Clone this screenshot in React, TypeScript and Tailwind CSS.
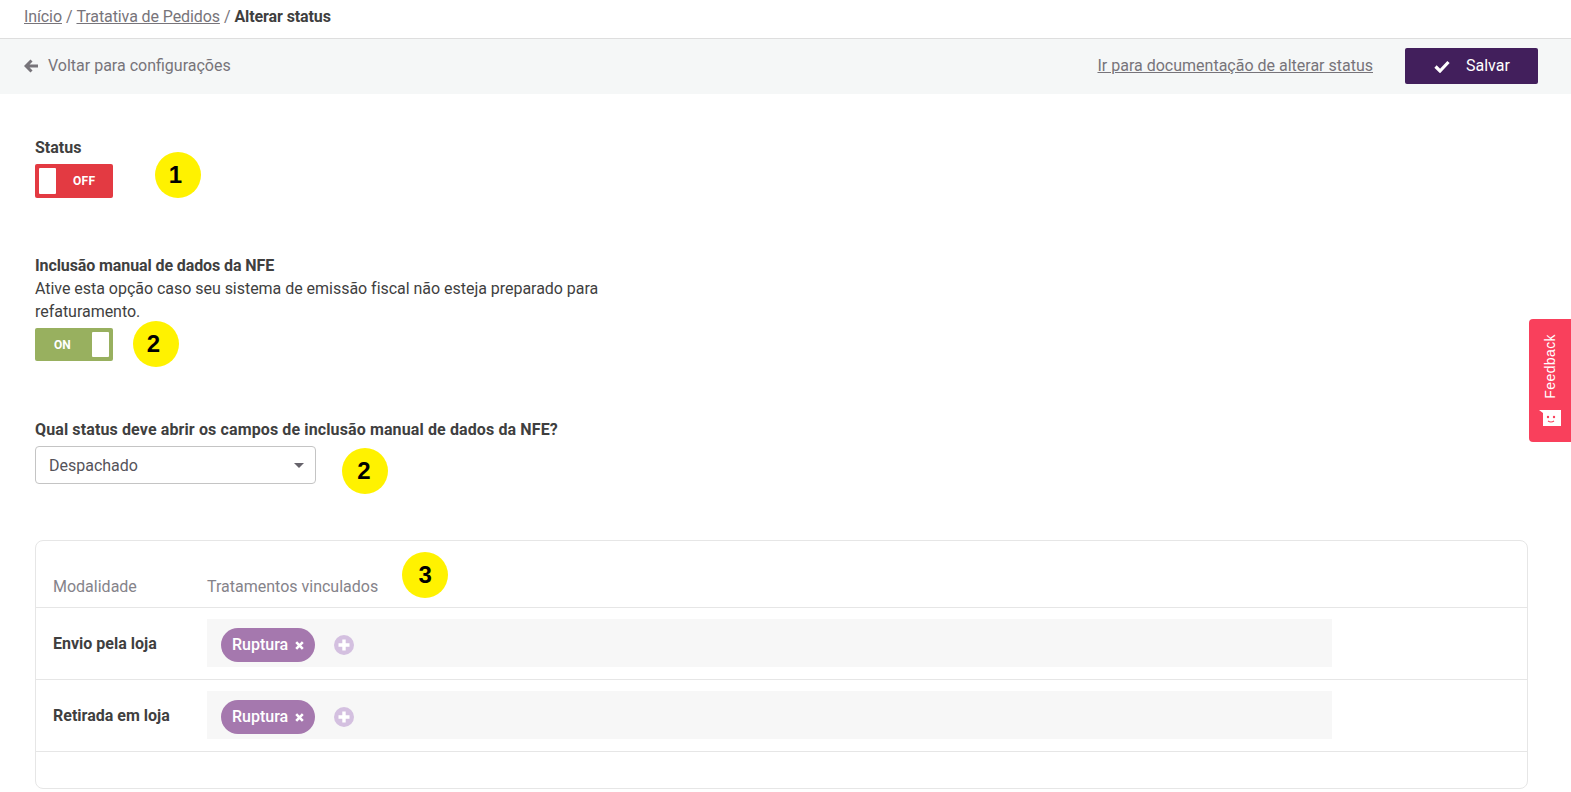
function Marker({ n, className }: { n: number; className: string }) {
  return (
    <div
      className={`flex h-[46px] w-[46px] shrink-0 items-center justify-center rounded-full bg-[#fff200] font-['Liberation_Sans',sans-serif] text-[24px] font-bold text-black ${className}`}
    >
      {n}
    </div>
  );
}

function Row({ name }: { name: string }) {
  return (
    <div className="flex h-[72px] items-center border-b border-[#e6e6e6] pb-px">
      <div className="w-[171px] pl-[17px] pt-[2px] font-bold text-[#3f3f3f]">{name}</div>
      <div className="flex h-[48px] w-[1125px] items-center bg-[#f7f7f7] pl-[14px] pt-[4px]">
        <div className="flex h-[34px] w-[94px] items-center rounded-full bg-[#a578ae] pl-[11px] font-medium text-white">
          Ruptura
          <svg className="ml-[7px]" width="9" height="9" viewBox="0 0 9 9" stroke="white" strokeWidth="2.6">
            <path d="M1.2 1.2l6.6 6.6M7.8 1.2l-6.6 6.6" />
          </svg>
        </div>
        <svg className="ml-[19px]" width="20" height="20" viewBox="0 0 20 20">
          <circle cx="10" cy="10" r="10" fill="#d4c0e0" />
          <path d="M10 4.5v11M4.5 10h11" stroke="white" strokeWidth="3.4" />
        </svg>
      </div>
    </div>
  );
}

export default function App() {
  return (
    <div className="relative h-[792px] w-full overflow-hidden bg-white font-['Roboto',sans-serif] text-[16px] text-[#3f3f3f]">
      <div className="flex h-[39px] items-center border-b border-[#dedede] pb-[5px] pl-[24px] tracking-[-0.1px] text-[#77747a]">
        <a className="underline" href="#">Início</a>
        <span className="mx-[4px]">/</span>
        <a className="underline" href="#">Tratativa de Pedidos</a>
        <span className="mx-[4px]">/</span>
        <span className="font-bold text-[#3f3f3f]">Alterar status</span>
      </div>

      <div className="flex h-[55px] items-center justify-between bg-[#f5f7f7] pb-px pl-[24px] pr-[33px] text-[#77747a]">
        <div className="flex items-center">
          <svg className="mr-[10px]" width="14" height="14" viewBox="0 0 14 14" fill="none" stroke="#77747a" strokeWidth="3">
            <path d="M7.5 1.5L2 7l5.5 5.5M2 7h12" />
          </svg>
          Voltar para configurações
        </div>
        <div className="flex items-center">
          <a className="underline" href="#">Ir para documentação de alterar status</a>
          <button className="ml-[32px] flex h-[36px] w-[133px] items-center rounded-[2px] bg-[#421f5c] pl-[29px] text-white">
            <svg className="mr-[16px]" width="16" height="13" viewBox="0 0 16 13" fill="none" stroke="white" strokeWidth="3.2">
              <path d="M1.5 6.5L6 11 14.5 2" />
            </svg>
            Salvar
          </button>
        </div>
      </div>

      <div className="px-[35px] pt-[45px]">
        <div className="font-bold leading-[18px]">Status</div>
        <div className="mt-[7px] flex items-center">
          <div className="flex h-[34px] w-[78px] items-center rounded-[2px] bg-[#e33a42] pl-[4px]">
            <div className="h-[26px] w-[17px] rounded-[1px] bg-white" />
            <span className="ml-[17px] text-[12px] font-bold tracking-[0.3px] text-white">OFF</span>
          </div>
          <Marker n={1} className="-my-[6px] ml-[42px] -translate-y-[6px] pr-[5px]" />
        </div>

        <div className="mt-[56px] w-[600px] leading-[23px] tracking-[-0.03px]">
          <div className="font-bold tracking-[-0.1px]">Inclusão manual de dados da NFE</div>
          <div>Ative esta opção caso seu sistema de emissão fiscal não esteja preparado para refaturamento.</div>
        </div>
        <div className="mt-[4px] flex items-center">
          <div className="flex h-[33px] w-[78px] items-center rounded-[2px] bg-[#98b05f] pl-[19px] pr-[4px]">
            <span className="pt-px text-[12px] font-bold text-white">ON</span>
            <div className="ml-auto h-[25px] w-[17px] rounded-[1px] bg-white" />
          </div>
          <Marker n={2} className="-my-[6px] ml-[20px] pr-[5px]" />
        </div>

        <div className="mt-[60px] font-bold leading-[18px] tracking-[0.12px]">Qual status deve abrir os campos de inclusão manual de dados da NFE?</div>
        <div className="mt-[7px] flex items-center">
          <div className="flex h-[38px] w-[281px] items-center justify-between rounded-[4px] border border-[#c4c4c4] pl-[13px] pr-[11px] pt-px text-[#55535a]">
            Despachado
            <div className="h-0 w-0 border-x-[5px] border-t-[5px] border-x-transparent border-t-[#66636b]" />
          </div>
          <Marker n={2} className="-my-[6px] ml-[26px] translate-y-[6px] pr-[2px]" />
        </div>

        <div className="mt-[56px] h-[249px] w-[1493px] rounded-[8px] border border-[#e6e6e6]">
          <div className="flex h-[67px] items-end border-b border-[#e6e6e6] pb-[8px] text-[#85838a]">
            <div className="w-[171px] pl-[17px]">Modalidade</div>
            <div>Tratamentos vinculados</div>
            <Marker n={3} className="mb-px ml-[24px]" />
          </div>
          <Row name="Envio pela loja" />
          <Row name="Retirada em loja" />
        </div>
      </div>

      <div className="absolute right-0 top-[319px] flex h-[123px] w-[42px] flex-col items-center justify-end rounded-l-[4px] bg-[#f9405c] pb-[15px] text-white">
        <span className="mb-[10px] rotate-180 font-['Liberation_Sans',sans-serif] text-[14px] tracking-[0.4px] [writing-mode:vertical-rl]">Feedback</span>
        <svg width="24" height="18" viewBox="0 0 24 18" fill="white">
          <path d="M1 1h22v16H5V4z" />
          <circle cx="10" cy="8" r="1.2" fill="#f9405c" />
          <circle cx="16" cy="8" r="1.2" fill="#f9405c" />
          <path d="M10 12q3 2 6 0" fill="none" stroke="#f9405c" strokeWidth="1.2" />
        </svg>
      </div>
    </div>
  );
}
